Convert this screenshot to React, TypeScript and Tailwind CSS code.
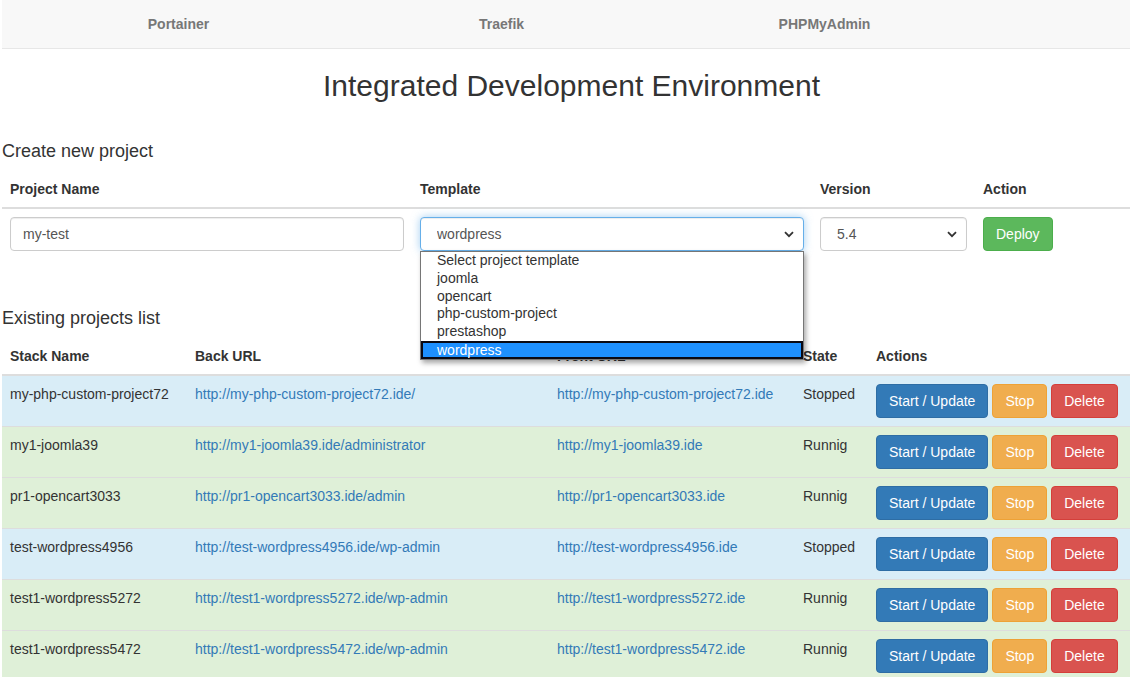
import React from "react";

interface Project {
  name: string;
  backUrl: string;
  frontUrl: string;
  state: "Stopped" | "Runnig";
}

const projects: Project[] = [
  {
    name: "my-php-custom-project72",
    backUrl: "http://my-php-custom-project72.ide/",
    frontUrl: "http://my-php-custom-project72.ide",
    state: "Stopped",
  },
  {
    name: "my1-joomla39",
    backUrl: "http://my1-joomla39.ide/administrator",
    frontUrl: "http://my1-joomla39.ide",
    state: "Runnig",
  },
  {
    name: "pr1-opencart3033",
    backUrl: "http://pr1-opencart3033.ide/admin",
    frontUrl: "http://pr1-opencart3033.ide",
    state: "Runnig",
  },
  {
    name: "test-wordpress4956",
    backUrl: "http://test-wordpress4956.ide/wp-admin",
    frontUrl: "http://test-wordpress4956.ide",
    state: "Stopped",
  },
  {
    name: "test1-wordpress5272",
    backUrl: "http://test1-wordpress5272.ide/wp-admin",
    frontUrl: "http://test1-wordpress5272.ide",
    state: "Runnig",
  },
  {
    name: "test1-wordpress5472",
    backUrl: "http://test1-wordpress5472.ide/wp-admin",
    frontUrl: "http://test1-wordpress5472.ide",
    state: "Runnig",
  },
];

const templates = [
  "Select project template",
  "joomla",
  "opencart",
  "php-custom-project",
  "prestashop",
  "wordpress",
];

function Chevron() {
  return (
    <svg
      className="pointer-events-none absolute right-[10px] top-[14px]"
      width="10"
      height="7"
      viewBox="0 0 10 7"
      fill="none"
    >
      <path d="M1 1.2 L5 5.2 L9 1.2" stroke="#333" strokeWidth="1.8" />
    </svg>
  );
}

export default function App() {
  return (
    <div className="ml-[2px] min-h-[677px] font-['Liberation_Sans',Arial,sans-serif] text-[14px] leading-[20px] text-[#333]">
      {/* Navbar */}
      <nav className="flex h-[49px] items-center border-b border-[#e7e7e7] bg-[#f8f8f8] pl-[15px]">
        {["Portainer", "Traefik", "PHPMyAdmin"].map((item) => (
          <a
            key={item}
            href="#"
            className="w-[323px] text-center text-[14px] font-bold text-[#777]"
          >
            {item}
          </a>
        ))}
      </nav>

      <h2 className="mt-[20px] pl-[11px] text-center text-[30px] leading-[33px] font-medium">
        Integrated Development Environment
      </h2>

      {/* Create new project */}
      <h4 className="mt-[39px] text-[18px] leading-[20px]">Create new project</h4>
      <table className="mt-[10px] w-full table-fixed border-collapse">
        <colgroup>
          <col className="w-[410px]" />
          <col className="w-[400px]" />
          <col className="w-[163px]" />
          <col className="w-[155px]" />
        </colgroup>
        <thead>
          <tr>
            {["Project Name", "Template", "Version", "Action"].map((h) => (
              <th
                key={h}
                className="border-b-2 border-[#ddd] p-2 text-left align-bottom font-bold"
              >
                {h}
              </th>
            ))}
          </tr>
        </thead>
        <tbody>
          <tr>
            <td className="p-2 align-top">
              <input
                defaultValue="my-test"
                className="h-[34px] w-full rounded-[4px] border border-[#ccc] px-3 text-[#555] shadow-[inset_0_1px_1px_rgba(0,0,0,0.075)] outline-none"
              />
            </td>
            <td className="p-2 align-top">
              <div className="relative">
                <select
                  defaultValue="wordpress"
                  className="h-[34px] w-full appearance-none rounded-[4px] border border-[#66afe9] bg-white pl-4 text-[#555] shadow-[inset_0_1px_1px_rgba(0,0,0,0.075),0_0_8px_rgba(102,175,233,0.6)] outline-none"
                >
                  {templates.map((t) => (
                    <option key={t}>{t}</option>
                  ))}
                </select>
                <Chevron />
                {/* open option list */}
                <ul className="absolute left-0 top-[34px] z-10 w-full border border-[#767676] bg-white py-0 text-[14px] leading-[17.8px] text-[#333] shadow-[2px_3px_5px_rgba(0,0,0,0.35)]">
                  {templates.map((t) =>
                    t === "wordpress" ? (
                      <li
                        key={t}
                        className="border-2 border-[#0a0a14] bg-[#1e90ff] pl-[14px] leading-[14px] text-white"
                      >
                        {t}
                      </li>
                    ) : (
                      <li key={t} className="pl-[16px]">
                        {t}
                      </li>
                    )
                  )}
                </ul>
              </div>
            </td>
            <td className="p-2 align-top">
              <div className="relative">
                <select
                  defaultValue="5.4"
                  className="h-[34px] w-full appearance-none rounded-[4px] border border-[#ccc] bg-white pl-4 text-[#555] shadow-[inset_0_1px_1px_rgba(0,0,0,0.075)] outline-none"
                >
                  <option>5.4</option>
                </select>
                <Chevron />
              </div>
            </td>
            <td className="p-2 align-top">
              <button className="h-[34px] rounded-[4px] border border-[#4cae4c] bg-[#5cb85c] px-3 text-white">
                Deploy
              </button>
            </td>
          </tr>
        </tbody>
      </table>

      {/* Existing projects */}
      <h4 className="mt-[49px] text-[18px] leading-[20px]">Existing projects list</h4>
      <table className="mt-[10px] w-full table-fixed border-collapse">
        <colgroup>
          <col className="w-[185px]" />
          <col className="w-[362px]" />
          <col className="w-[246px]" />
          <col className="w-[73px]" />
          <col className="w-[262px]" />
        </colgroup>
        <thead>
          <tr>
            {["Stack Name", "Back URL", "Front URL", "State", "Actions"].map((h) => (
              <th
                key={h}
                className="border-b-2 border-[#ddd] p-2 text-left align-bottom font-bold"
              >
                {h}
              </th>
            ))}
          </tr>
        </thead>
        <tbody>
          {projects.map((p) => (
            <tr
              key={p.name}
              className={p.state === "Stopped" ? "bg-[#d9edf7]" : "bg-[#dff0d8]"}
            >
              <td className="border-t border-[#ddd] p-2 align-top whitespace-nowrap">
                {p.name}
              </td>
              <td className="border-t border-[#ddd] p-2 align-top">
                <a href="#" className="text-[#337ab7]">
                  {p.backUrl}
                </a>
              </td>
              <td className="border-t border-[#ddd] p-2 align-top">
                <a href="#" className="text-[#337ab7]">
                  {p.frontUrl}
                </a>
              </td>
              <td className="border-t border-[#ddd] p-2 align-top">{p.state}</td>
              <td className="border-t border-[#ddd] p-2 align-top">
                <div className="flex gap-[4px]">
                  <button className="h-[34px] rounded-[4px] border border-[#2e6da4] bg-[#337ab7] px-3 text-white">
                    Start / Update
                  </button>
                  <button className="h-[34px] rounded-[4px] border border-[#eea236] bg-[#f0ad4e] px-3 text-white">
                    Stop
                  </button>
                  <button className="h-[34px] rounded-[4px] border border-[#d43f3a] bg-[#d9534f] px-3 text-white">
                    Delete
                  </button>
                </div>
              </td>
            </tr>
          ))}
        </tbody>
      </table>
    </div>
  );
}
